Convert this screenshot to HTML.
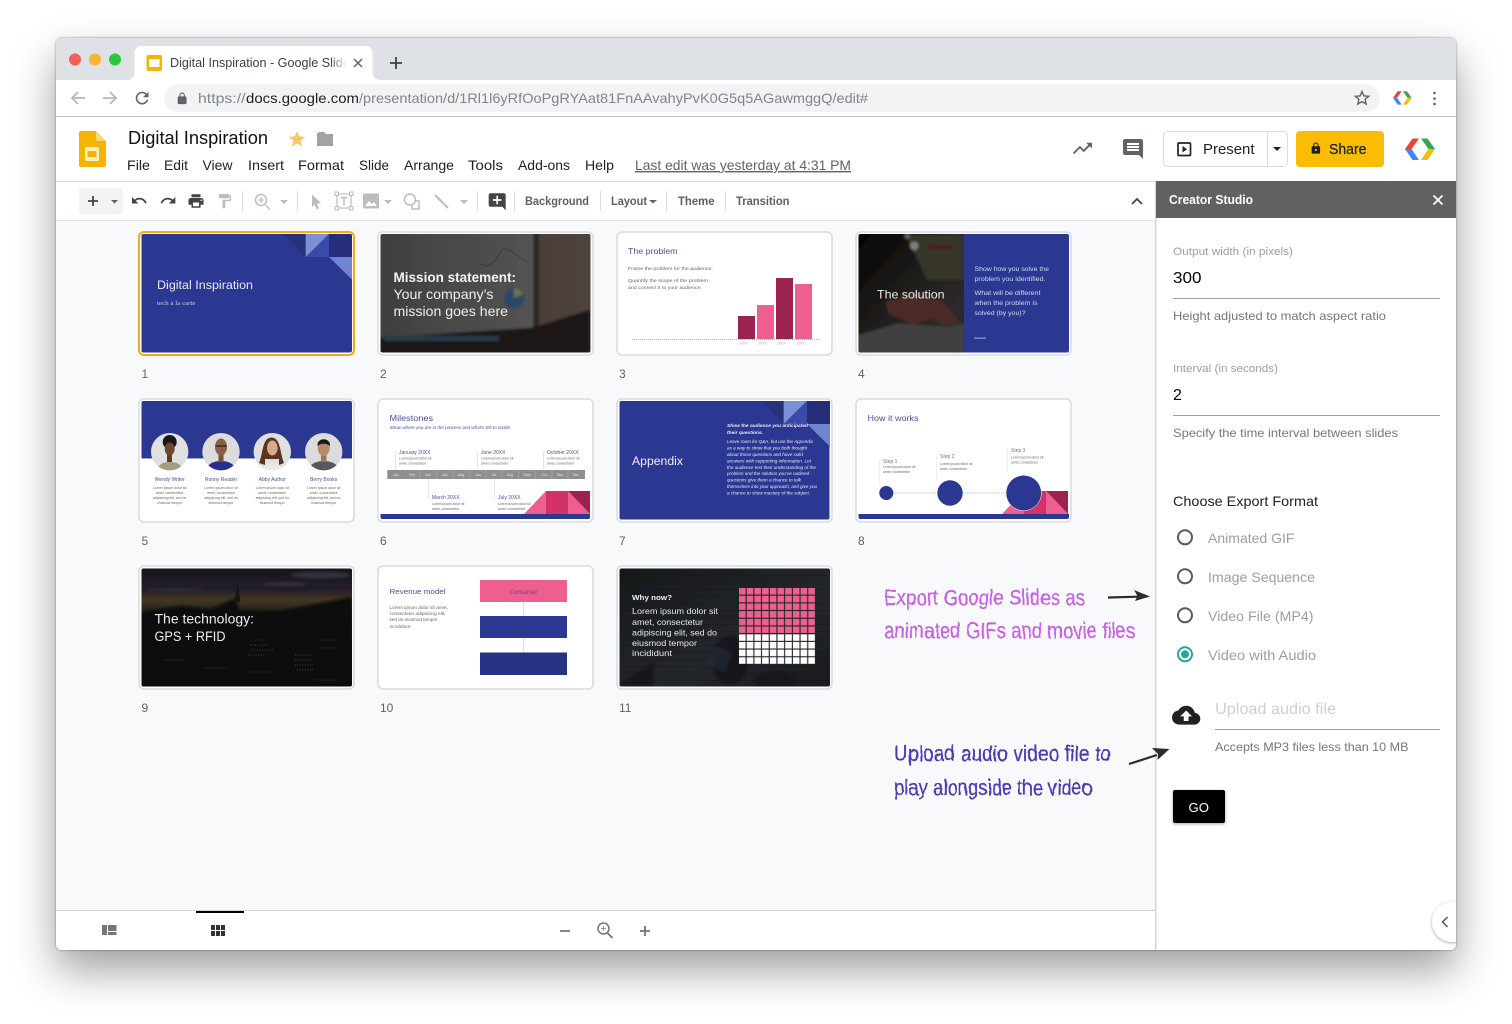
<!DOCTYPE html>
<html lang="en"><head><meta charset="utf-8"><title>Digital Inspiration - Google Slides</title>
<style>
html,body{margin:0;padding:0;background:#fff;width:1512px;height:1024px;overflow:hidden}
#win{position:absolute;left:56px;top:38px;width:1400px;height:912px;border-radius:6px;box-shadow:0 20px 42px rgba(0,0,0,.38),0 0 2px rgba(0,0,0,.45)}
svg{position:absolute;left:0;top:0}
text{font-family:"Liberation Sans",sans-serif}
.m{fill:#202124;font-size:14px}
.tb{fill:#444;font-size:12px;font-weight:bold;opacity:.85}
.lbl{fill:#9e9e9e;font-size:11px}
.hint{fill:#777;font-size:12px}
.rad{fill:#9e9e9e;font-size:14px}
.num{fill:#5f6368;font-size:12px}
.ico{fill:#5f6368}
.dis{fill:#bdbdbd}
.fr{fill:#fff;stroke:#dadce0;stroke-width:1.6}
.hw{font-size:22px;filter:url(#wob);stroke-width:.25px}
.tt{fill:#4a4f9e}
.nm{fill:#4a4f9e;font-size:5px;text-anchor:middle}
.lc{fill:#666;font-size:3.5px;text-anchor:middle}
.mo{fill:#e4e4e4;font-size:3.5px;text-anchor:middle}
.ms{fill:#4a4f9e;font-size:5px}
</style></head><body>
<div id="win"></div>
<svg width="1512" height="1024" viewBox="0 0 1512 1024" xmlns="http://www.w3.org/2000/svg">
<defs>
<filter id="wob" x="-5%" y="-30%" width="110%" height="160%"><feTurbulence type="fractalNoise" baseFrequency="0.07" numOctaves="2" seed="5"/><feDisplacementMap in="SourceGraphic" scale="3"/></filter>
<filter id="b1"><feGaussianBlur stdDeviation="1.2"/></filter>
<filter id="b0"><feGaussianBlur stdDeviation=".25"/></filter>
<filter id="sh" x="-20%" y="-20%" width="140%" height="150%"><feDropShadow dx="0" dy="1" stdDeviation="1.5" flood-color="#000" flood-opacity=".35"/></filter>
<linearGradient id="fade" x1="0" x2="1"><stop offset="0" stop-color="#fff" stop-opacity="0"/><stop offset="1" stop-color="#fff"/></linearGradient>
<linearGradient id="sky" x1="0" x2="0" y1="0" y2="1"><stop offset="0" stop-color="#15161d"/><stop offset=".18" stop-color="#241e2a"/><stop offset=".27" stop-color="#43361f"/><stop offset=".33" stop-color="#2b2a20"/><stop offset=".42" stop-color="#141517"/><stop offset="1" stop-color="#0d0d0d"/></linearGradient>
<linearGradient id="s2" x1="0" x2="1" y1="0" y2="0"><stop offset="0" stop-color="#3f3f3f"/><stop offset=".72" stop-color="#535353"/><stop offset=".74" stop-color="#262321"/><stop offset=".765" stop-color="#4a3f38"/><stop offset="1" stop-color="#4e433c"/></linearGradient>
<linearGradient id="s4" x1="0" x2="1" y1="0" y2="1"><stop offset="0" stop-color="#030303"/><stop offset=".45" stop-color="#1f1d1a"/><stop offset=".8" stop-color="#2d2b2b"/><stop offset="1" stop-color="#1f1e20"/></linearGradient>
<linearGradient id="s11" x1="0" x2="1" y1="0" y2="1"><stop offset="0" stop-color="#15181c"/><stop offset=".6" stop-color="#24272b"/><stop offset="1" stop-color="#181b1f"/></linearGradient>
<pattern id="cell" x="739" y="588" width="7.7" height="7.7" patternUnits="userSpaceOnUse"><rect width="6.6" height="6.6" fill="#fff"/></pattern>
<pattern id="cellp" x="739" y="588" width="7.7" height="7.7" patternUnits="userSpaceOnUse"><rect width="6.6" height="6.6" fill="#ee5f8f"/></pattern>
<pattern id="st" x="0" y="568" width="210" height="7" patternUnits="userSpaceOnUse"><rect width="210" height="1" fill="#000" opacity=".14"/></pattern>
<clipPath id="c1"><rect x="141.5" y="234" width="210.5" height="118.5" rx="2"/></clipPath>
<clipPath id="c2"><rect x="380.5" y="234" width="210" height="118.5" rx="2"/></clipPath>
<clipPath id="c4"><rect x="858.5" y="234" width="210.5" height="118.5" rx="2"/></clipPath>
<clipPath id="c9"><rect x="141.5" y="568.5" width="210.5" height="118" rx="2"/></clipPath>
<clipPath id="c11"><rect x="619.5" y="568.5" width="210.5" height="118" rx="2"/></clipPath>
<clipPath id="p1"><circle cx="169.7" cy="451.7" r="18.7"/></clipPath>
<clipPath id="p2"><circle cx="221" cy="451.7" r="18.7"/></clipPath>
<clipPath id="p3"><circle cx="272.3" cy="451.7" r="18.7"/></clipPath>
<clipPath id="p4"><circle cx="323.7" cy="451.7" r="18.7"/></clipPath>
<clipPath id="winc"><rect x="56" y="38" width="1400" height="912" rx="6"/></clipPath>
<g id="gd"><polygon points="0,11 7.5,.5 14,.5 6.5,11" fill="#ea4335"/><polygon points="0,11 6.5,11 14,22 7.5,22" fill="#4285f4"/><polygon points="16,.5 22.5,.5 30,11 23.5,11" fill="#34a853"/><polygon points="23.5,11 30,11 22.5,22 16,22" fill="#fbbc04"/></g>
<g id="tri"><polygon points="0,0 21.7,0 21.7,23" fill="#253079"/><polygon points="21.7,0 45,0 21.7,23" fill="#7c90d4"/><polygon points="45,0 45,23 21.7,23" fill="#3a48a8"/><rect x="45" width="23" height="23" fill="#252e7b"/><polygon points="45,23 68,23 68,45.500" fill="#6f85cf"/></g>
<g id="pk"><polygon points="0,23 22,0 22,23" fill="#ee5f8f"/><rect x="22" width="22" height="23" fill="#d23369"/><polygon points="44,0 66,23 44,23" fill="#ee5f8f"/><polygon points="44,0 66,0 66,23" fill="#9c2350"/></g>
</defs>

<g clip-path="url(#winc)">
<!-- chrome -->
<rect x="56" y="38" width="1400" height="42" fill="#dee1e6"/>
<rect x="56" y="80" width="1400" height="36" fill="#fff"/>
<rect x="56" y="116" width="1400" height="1" fill="#c4c5c8"/>
<rect x="56" y="117" width="1400" height="833" fill="#fff"/>
<circle cx="75" cy="59.500" r="6" fill="#f25f57"/><circle cx="95" cy="59.500" r="6" fill="#fbb52e"/><circle cx="115" cy="59.500" r="6" fill="#2ac640"/>
<path d="M127 80c5 0 7.500-3 7.500-8V53c0-4 3-7 7-7h224c4 0 7 3 7 7v19c0 5 3 8 8 8z" fill="#fff"/>
<rect x="146.500" y="55" width="15.500" height="16" rx="2" fill="#f4b400"/><rect x="149" y="59" width="10.500" height="8" fill="#fff"/>
<text x="170" y="67" font-size="12.500" fill="#3c4043" textLength="186" lengthAdjust="spacingAndGlyphs">Digital Inspiration - Google Slides</text>
<rect x="331" y="52" width="15" height="22" fill="url(#fade)"/><rect x="346" y="52" width="24" height="22" fill="#fff"/>
<path d="M354 59l8 8M362 59l-8 8" stroke="#5f6368" stroke-width="1.500"/>
<path d="M396 57v12M390 63h12" stroke="#3c4043" stroke-width="1.800"/>
<path d="M85 98H72m6-6l-6 6 6 6" fill="none" stroke="#b4b6b9" stroke-width="1.700"/>
<path d="M103 98h13m-6-6l6 6-6 6" fill="none" stroke="#b4b6b9" stroke-width="1.700"/>
<path class="ico" transform="translate(132.500 88.500) scale(.8)" d="M17.650 6.350C16.200 4.900 14.210 4 12 4c-4.420 0-7.990 3.580-7.990 8s3.570 8 7.990 8c3.730 0 6.840-2.550 7.730-6h-2.080c-.82 2.330-3.040 4-5.650 4-3.310 0-6-2.690-6-6s2.690-6 6-6c1.660 0 3.140.69 4.220 1.780L13 11h7V4l-2.350 2.350z"/>
<rect x="164" y="84" width="1216" height="28" rx="14" fill="#f1f3f4"/>
<path class="ico" transform="translate(175.500 92) scale(.55)" d="M18 8h-1V6c0-2.760-2.240-5-5-5S7 3.240 7 6v2H6c-1.100 0-2 .9-2 2v10c0 1.100.9 2 2 2h12c1.100 0 2-.9 2-2V10c0-1.100-.9-2-2-2zm-2.900 0H8.900V6c0-1.710 1.390-3.100 3.100-3.100 1.710 0 3.100 1.390 3.100 3.100v2z"/>
<text x="198" y="103" font-size="14" fill="#80868b" textLength="47.500" lengthAdjust="spacingAndGlyphs">https://</text>
<text x="246" y="103" font-size="14" fill="#202124" textLength="113" lengthAdjust="spacingAndGlyphs">docs.google.com</text>
<text x="359" y="103" font-size="14" fill="#80868b" textLength="509" lengthAdjust="spacingAndGlyphs">/presentation/d/1Rl1l6yRfOoPgRYAat81FnAAvahyPvK0G5q5AGawmggQ/edit#</text>
<path d="M1362 91.500l1.900 4.400 4.800.4-3.600 3.100 1.100 4.700-4.200-2.500-4.200 2.500 1.100-4.700-3.600-3.100 4.800-.4z" fill="none" stroke="#5f6368" stroke-width="1.400"/>
<use href="#gd" transform="translate(1393 91) scale(.62)"/>
<circle cx="1434.500" cy="93" r="1.300" fill="#5f6368"/><circle cx="1434.500" cy="98.500" r="1.300" fill="#5f6368"/><circle cx="1434.500" cy="104" r="1.300" fill="#5f6368"/>

<!-- docs header -->
<path d="M81 131h15l10 10v24a2 2 0 0 1-2 2H81a2 2 0 0 1-2-2v-32a2 2 0 0 1 2-2z" fill="#f4b400"/>
<path d="M96 131l10 10H96z" fill="#f8d775"/>
<rect x="85" y="147" width="14" height="14" rx="1" fill="#fdeec0"/><rect x="87.500" y="151" width="9" height="6" fill="#f4b400"/>
<text x="128" y="144" font-size="18.500" fill="#111" textLength="140" lengthAdjust="spacingAndGlyphs">Digital Inspiration</text>
<path d="M297 131l2.300 5.400 5.900.5-4.500 3.900 1.400 5.700-5.100-3-5.100 3 1.400-5.700-4.500-3.900 5.900-.5z" fill="#f5c96a"/>
<path d="M319 132h5l2 2h7v12h-16v-12.500z" fill="#a3a3a3"/>
<g class="m">
<text x="127" y="170" textLength="23" lengthAdjust="spacingAndGlyphs">File</text>
<text x="164" y="170" textLength="24" lengthAdjust="spacingAndGlyphs">Edit</text>
<text x="202.500" y="170" textLength="30" lengthAdjust="spacingAndGlyphs">View</text>
<text x="248" y="170" textLength="36" lengthAdjust="spacingAndGlyphs">Insert</text>
<text x="298" y="170" textLength="46" lengthAdjust="spacingAndGlyphs">Format</text>
<text x="359" y="170" textLength="30" lengthAdjust="spacingAndGlyphs">Slide</text>
<text x="404" y="170" textLength="50" lengthAdjust="spacingAndGlyphs">Arrange</text>
<text x="468" y="170" textLength="35" lengthAdjust="spacingAndGlyphs">Tools</text>
<text x="518" y="170" textLength="52" lengthAdjust="spacingAndGlyphs">Add-ons</text>
<text x="585" y="170" textLength="29" lengthAdjust="spacingAndGlyphs">Help</text>
</g>
<text x="635" y="170" font-size="14" fill="#5f6368" text-decoration="underline" textLength="216" lengthAdjust="spacingAndGlyphs">Last edit was yesterday at 4:31 PM</text>
<path class="ico" transform="translate(1071 137) scale(.95)" d="M16 6l2.290 2.290-4.880 4.880-4-4L2 16.590 3.410 18l6-6 4 4 6.300-6.290L22 12V6z"/>
<path class="ico" transform="translate(1121 137) scale(1)" d="M21.990 4c0-1.100-.89-2-1.990-2H4c-1.100 0-2 .9-2 2v12c0 1.100.9 2 2 2h14l4 4-.01-18zM18 14H6v-2h12v2zm0-3H6V9h12v2zm0-3H6V6h12v2z"/>
<rect x="1163.500" y="131.500" width="124" height="35" rx="4" fill="#fff" stroke="#dadce0"/>
<path d="M1267.500 132v34" stroke="#dadce0"/>
<rect x="1178" y="143" width="12.500" height="12.500" rx="1" fill="none" stroke="#202124" stroke-width="1.700"/><path d="M1182.500 146v6.500l4.500-3.200z" fill="#202124"/>
<text x="1203" y="154" font-size="14.500" fill="#202124" textLength="51.500" lengthAdjust="spacingAndGlyphs">Present</text>
<path d="M1273 147h8l-4 4z" fill="#202124"/>
<rect x="1296" y="131" width="88" height="36" rx="4" fill="#fbbc04"/>
<path fill="#202124" transform="translate(1309.500 142) scale(.53)" d="M18 8h-1V6c0-2.760-2.240-5-5-5S7 3.240 7 6v2H6c-1.100 0-2 .9-2 2v10c0 1.100.9 2 2 2h12c1.100 0 2-.9 2-2V10c0-1.100-.9-2-2-2zm-6 9c-1.100 0-2-.9-2-2s.9-2 2-2 2 .9 2 2-.9 2-2 2zm3.100-9H8.900V6c0-1.710 1.390-3.100 3.100-3.100 1.710 0 3.100 1.390 3.100 3.100v2z"/>
<text x="1329" y="154" font-size="14.500" fill="#202124" stroke="#202124" stroke-width=".2" textLength="37.500" lengthAdjust="spacingAndGlyphs">Share</text>
<use href="#gd" transform="translate(1405 138)"/>
<rect x="56" y="181" width="1100" height="1" fill="#dadce0"/>

<!-- main -->
<rect x="56" y="221" width="1100" height="689" fill="#f8f9fb"/>
<rect x="56" y="220" width="1100" height="1" fill="#dfe1e5"/>
<rect x="56" y="910" width="1100" height="1" fill="#cfd1d5"/>

<!-- toolbar -->
<rect x="79" y="188" width="44" height="26" rx="2" fill="#f1f3f4"/>
<path d="M93 196v10M88 201h10" stroke="#444" stroke-width="1.800"/><path d="M111 200h7l-3.500 3.500z" fill="#5f6368"/>
<path fill="#444" transform="translate(130.500 192) scale(.72)" d="M12.500 8c-2.650 0-5.050.99-6.900 2.600L2 7v9h9l-3.620-3.620c1.390-1.160 3.160-1.880 5.120-1.880 3.540 0 6.550 2.310 7.600 5.500l2.370-.78C21.080 11.030 17.150 8 12.500 8z"/>
<path fill="#444" transform="translate(159.500 192) scale(.72)" d="M18.400 10.600C16.550 8.990 14.150 8 11.500 8c-4.650 0-8.580 3.030-9.960 7.220L3.900 16c1.050-3.190 4.050-5.500 7.600-5.500 1.950 0 3.730.72 5.120 1.880L13 16h9V7l-3.600 3.600z"/>
<path fill="#444" transform="translate(187 192) scale(.75)" d="M19 8H5c-1.660 0-3 1.340-3 3v6h4v4h12v-4h4v-6c0-1.660-1.340-3-3-3zm-3 11H8v-5h8v5zm3-7c-.55 0-1-.45-1-1s.45-1 1-1 1 .45 1 1-.45 1-1 1zm-1-9H6v4h12V3z"/>
<path class="dis" transform="translate(216 192.500) scale(.72)" d="M18 4V3c0-.55-.45-1-1-1H5c-.55 0-1 .45-1 1v4c0 .55.45 1 1 1h12c.55 0 1-.45 1-1V6h1v4H9v11c0 .55.45 1 1 1h2c.55 0 1-.45 1-1v-9h8V4h-3z"/>
<path d="M242.500 191v20M297.500 191v20M477.500 191v20M514.500 191v20M600.500 191v20M666.500 191v20M725.500 191v20" stroke="#dadce0"/>
<circle cx="261" cy="200" r="5.500" fill="none" stroke="#bdbdbd" stroke-width="1.500"/><path d="M265 204.500l5 5M258 200h6M261 197v6" stroke="#bdbdbd" stroke-width="1.300"/>
<path d="M280 200h8l-4 4zM384 200h8l-4 4zM460 200h8l-4 4z" fill="#bdbdbd"/>
<path d="M312 194.500l9 8.500-4 .5 2 5-2 1-2.300-5-2.700 2.500z" fill="#bdbdbd"/>
<rect x="337" y="194" width="14" height="14" fill="none" stroke="#bdbdbd" stroke-width="1.200"/><rect x="335" y="192" width="3.500" height="3.500" fill="#fff" stroke="#bdbdbd"/><rect x="349.500" y="192" width="3.500" height="3.500" fill="#fff" stroke="#bdbdbd"/><rect x="335" y="206.500" width="3.500" height="3.500" fill="#fff" stroke="#bdbdbd"/><rect x="349.500" y="206.500" width="3.500" height="3.500" fill="#fff" stroke="#bdbdbd"/><path d="M340.500 197.500h7M344 197.500v8" stroke="#bdbdbd" stroke-width="1.500"/>
<rect x="363" y="193.500" width="16" height="15" rx="1" fill="#bdbdbd"/><path d="M365 206l4-5 3 3 2-2 3 4z" fill="#fff"/>
<circle cx="410" cy="199.500" r="5.500" fill="none" stroke="#bdbdbd" stroke-width="1.500"/><path d="M412 204v5h7v-8h-3" fill="none" stroke="#bdbdbd" stroke-width="1.500"/>
<path d="M435 195l13 13" stroke="#bdbdbd" stroke-width="2"/>
<path fill="#444" transform="translate(487 191.500) scale(.85)" d="M21.990 4c0-1.100-.89-2-1.990-2H4c-1.100 0-2 .9-2 2v12c0 1.100.9 2 2 2h14l4 4-.01-18zM17 11h-4v4h-2v-4H7V9h4V5h2v4h4v2z"/>
<g class="tb">
<text x="525" y="205" textLength="64" lengthAdjust="spacingAndGlyphs">Background</text>
<text x="611" y="205" textLength="36" lengthAdjust="spacingAndGlyphs">Layout</text>
<text x="678" y="205" textLength="36.500" lengthAdjust="spacingAndGlyphs">Theme</text>
<text x="736" y="205" textLength="53.500" lengthAdjust="spacingAndGlyphs">Transition</text>
</g>
<path d="M649 200h8l-4 3.500z" fill="#5f6368"/>
<path d="M1132 204l5-5 5 5" fill="none" stroke="#444" stroke-width="1.800"/>

<g filter="url(#b0)">
<!-- slide 1 -->
<rect x="139" y="232" width="215" height="123" rx="5" fill="#fff" stroke="#f4a81c" stroke-width="2"/>
<g clip-path="url(#c1)"><rect x="141.500" y="234" width="210.500" height="118.500" fill="#2c3792"/><use href="#tri" transform="translate(284 234)"/></g>
<text x="157" y="289" font-size="12.300" fill="#e8eaf6" textLength="96" lengthAdjust="spacingAndGlyphs">Digital Inspiration</text>
<text x="157" y="305" font-size="6" fill="#c5cae9" style="font-family:'Liberation Serif',serif" textLength="38.500" lengthAdjust="spacingAndGlyphs">tech à la carte</text>

<!-- slide 2 -->
<rect class="fr" x="378" y="232" width="215" height="123" rx="5"/>
<g clip-path="url(#c2)">
<rect x="380.500" y="234" width="210" height="118.500" fill="url(#s2)"/>
<g filter="url(#b1)">
<path d="M380 338L533 328l57-18v44H380z" fill="#1a1817"/>
<path d="M384 336h115v5H384z" fill="#2b3a4a"/>
<circle cx="514" cy="298" r="10" fill="#2b4768"/><path d="M514 298v-10a10 10 0 0 1 9 6z" fill="#66784c"/>
</g>
<path d="M480 264l8 2 7-5 8-13 8 3 16 11" fill="none" stroke="#2c2c2c" stroke-width=".6" opacity=".8"/>
</g>
<text x="393.500" y="282" font-size="14" font-weight="bold" fill="#f3f3f3" textLength="122.500" lengthAdjust="spacingAndGlyphs">Mission statement:</text>
<text x="393.500" y="299" font-size="14" fill="#eee" textLength="100" lengthAdjust="spacingAndGlyphs">Your company’s</text>
<text x="393.500" y="316" font-size="14" fill="#eee" textLength="114.500" lengthAdjust="spacingAndGlyphs">mission goes here</text>

<!-- slide 3 -->
<rect class="fr" x="617" y="232" width="215" height="123" rx="5"/>
<text class="tt" x="628" y="254" font-size="8.200" textLength="49.500" lengthAdjust="spacingAndGlyphs">The problem</text>
<g fill="#666" font-size="4.700">
<text x="628" y="270" textLength="85" lengthAdjust="spacingAndGlyphs">Frame the problem for the audience.</text>
<text x="628" y="282" textLength="80" lengthAdjust="spacingAndGlyphs">Quantify the scope of the problem</text>
<text x="628" y="289" textLength="74" lengthAdjust="spacingAndGlyphs">and connect it to your audience.</text>
</g>
<rect x="738" y="316" width="17" height="23" fill="#9c2350"/><rect x="757" y="305" width="17" height="34" fill="#ee5f8f"/><rect x="776" y="278" width="17" height="61" fill="#9c2350"/><rect x="795" y="284" width="17" height="55" fill="#ee5f8f"/>
<path d="M632 339.500h188" stroke="#999" stroke-width=".8" stroke-dasharray="1 1"/>
<g fill="#aaa" font-size="3.500"><text x="739" y="344.500">20XX</text><text x="758" y="344.500">20XX</text><text x="777" y="344.500">20XX</text><text x="796" y="344.500">20XX</text></g>

<!-- slide 4 -->
<rect class="fr" x="856" y="232" width="215" height="123" rx="5"/>
<g clip-path="url(#c4)">
<rect x="858.500" y="234" width="106" height="118.500" fill="url(#s4)"/>
<g filter="url(#b1)">
<path d="M905 234h60v46h-38z" fill="#34352b"/>
<circle cx="914" cy="246" r="4.500" fill="#7d7d7d"/><circle cx="907" cy="236" r="3" fill="#666"/>
<rect x="928" y="245" width="26" height="5" fill="#4a2320"/>
<path d="M858 335l40-12 50 4 17-4v30h-107z" fill="#3f3f3f"/>
<path d="M885 302l30-9 28 8 18 22-16 3-14-7-18 6-24-11z" fill="#4a2a28"/>
</g>
<rect x="964" y="234" width="105" height="118.500" fill="#2c3792"/>
</g>
<text x="877" y="298.500" font-size="12" fill="#eee" textLength="67.500" lengthAdjust="spacingAndGlyphs">The solution</text>
<g fill="#d3d7ef" font-size="6.500">
<text x="974.500" y="271" textLength="74.500" lengthAdjust="spacingAndGlyphs">Show how you solve the</text>
<text x="974.500" y="281" textLength="71" lengthAdjust="spacingAndGlyphs">problem you identified.</text>
<text x="974.500" y="295" textLength="66" lengthAdjust="spacingAndGlyphs">What will be different</text>
<text x="974.500" y="305" textLength="63" lengthAdjust="spacingAndGlyphs">when the problem is</text>
<text x="974.500" y="315" textLength="51" lengthAdjust="spacingAndGlyphs">solved (by you)?</text>
</g>
<rect x="974" y="337.500" width="12" height="1.200" fill="#8f97d0"/>

<!-- numbers -->
<g class="num">
<text x="141.500" y="378">1</text><text x="380" y="378">2</text><text x="619" y="378">3</text><text x="858" y="378">4</text>
<text x="141.500" y="545">5</text><text x="380" y="545">6</text><text x="619" y="545">7</text><text x="858" y="545">8</text>
<text x="141.500" y="712">9</text><text x="380" y="712">10</text><text x="619" y="712">11</text>
</g>

<!-- slide 5 -->
<rect class="fr" x="139" y="399" width="215" height="123" rx="5"/>
<path d="M141.500 403a2 2 0 0 1 2-2H350a2 2 0 0 1 2 2v55H141.500z" fill="#2c3792"/>
<rect x="141.500" y="458" width="210.500" height="1" fill="#9da3d8"/>
<g clip-path="url(#p1)"><rect x="150" y="432" width="40" height="40" fill="#e0e0e0"/><path d="M156 472c2-8 7-10 13.700-10s12 2 14 10z" fill="#a69a82"/><rect x="167" y="454" width="5" height="8" fill="#5d3a28"/><circle cx="169.700" cy="442" r="7" fill="#1f1612"/><ellipse cx="169.700" cy="449" rx="5" ry="6.500" fill="#6d4632"/></g>
<g clip-path="url(#p2)"><rect x="201" y="432" width="40" height="40" fill="#dcdcdc"/><path d="M205 472c2-8 8-11 16-11s14 3 16 11z" fill="#2b2f8f"/><rect x="218.500" y="454" width="5" height="8" fill="#7a523a"/><ellipse cx="221" cy="447" rx="6" ry="8.500" fill="#8a5e44"/><path d="M215.500 446h11" stroke="#222" stroke-width="1.300"/></g>
<g clip-path="url(#p3)"><rect x="252" y="432" width="40" height="40" fill="#e0e0e0"/><path d="M265 442c-3 6-3 14-6 21l6 2v-6h14v6l5-2c-3-7-3-15-6-21-3-6-10-6-13 0z" fill="#5a3420"/><path d="M261 472c2-6 6-9 11-9s10 3 12 9z" fill="#efe9dc"/><ellipse cx="272.300" cy="448" rx="5.300" ry="7.500" fill="#d9a98c"/></g>
<g clip-path="url(#p4)"><rect x="303" y="432" width="40" height="40" fill="#dcdcdc"/><path d="M307 472c2-8 9-11 16.700-11s15 3 17 11z" fill="#55595c"/><rect x="321" y="454" width="5.500" height="8" fill="#9d7558"/><ellipse cx="323.700" cy="448" rx="6" ry="8" fill="#b98a6a"/><path d="M317.500 446c-1-9 13.500-9 12.500 0-3-3-9.500-3-12.500 0z" fill="#1d1d1d"/></g>
<text class="nm" x="169.700" y="481">Wendy Writer</text><text class="nm" x="221" y="481">Ronny Reader</text><text class="nm" x="272.300" y="481">Abby Author</text><text class="nm" x="323.700" y="481">Berry Books</text>
<g class="lc">
<text x="169.700" y="489">Lorem ipsum dolor sit</text><text x="169.700" y="494">amet, consectetur</text><text x="169.700" y="499">adipiscing elit, sed do</text><text x="169.700" y="504">eiusmod tempor</text>
<text x="221" y="489">Lorem ipsum dolor sit</text><text x="221" y="494">amet, consectetur</text><text x="221" y="499">adipiscing elit, sed do</text><text x="221" y="504">eiusmod tempor</text>
<text x="272.300" y="489">Lorem ipsum dolor sit</text><text x="272.300" y="494">amet, consectetur</text><text x="272.300" y="499">adipiscing elit, sed do</text><text x="272.300" y="504">eiusmod tempor</text>
<text x="323.700" y="489">Lorem ipsum dolor sit</text><text x="323.700" y="494">amet, consectetur</text><text x="323.700" y="499">adipiscing elit, sed do</text><text x="323.700" y="504">eiusmod tempor</text>
</g>

<!-- slide 6 -->
<rect class="fr" x="378" y="399" width="215" height="123" rx="5"/>
<text class="tt" x="389.500" y="421" font-size="8" textLength="43.500" lengthAdjust="spacingAndGlyphs">Milestones</text>
<text class="tt" x="389.500" y="429" font-size="4.400" font-style="italic" textLength="120.500" lengthAdjust="spacingAndGlyphs">Show where you are in the process and what’s left to tackle</text>
<rect x="387.300" y="470" width="197.700" height="9" fill="#8f8f8f"/>
<path d="M420 470v9M436.500 470v9M453 470v9M469.500 470v9M486 470v9M502 470v9M518.500 470v9M535 470v9M552 470v9M568 470v9" stroke="#bdbdbd" stroke-width=".4"/>
<g class="mo"><text x="396" y="476">Jan</text><text x="412" y="476">Feb</text><text x="428" y="476">Mar</text><text x="445" y="476">Apr</text><text x="461" y="476">May</text><text x="478" y="476">Jun</text><text x="494" y="476">Jul</text><text x="510" y="476">Aug</text><text x="527" y="476">Sept</text><text x="544" y="476">Oct</text><text x="560" y="476">Nov</text><text x="576" y="476">Dec</text></g>
<path d="M395.500 451v19M477.500 451v19M543.500 451v19M428.500 479v19M494.500 479v19" stroke="#ccc" stroke-width=".5"/>
<g class="ms"><text x="399" y="454">January 20XX</text><text x="481" y="454">June 20XX</text><text x="547" y="454">October 20XX</text><text x="432" y="499">March 20XX</text><text x="498" y="499">July 20XX</text></g>
<g fill="#666" font-size="3.400">
<text x="399" y="459.500">Lorem ipsum dolor sit</text><text x="399" y="464.500">amet, consectetur</text>
<text x="481" y="459.500">Lorem ipsum dolor sit</text><text x="481" y="464.500">amet, consectetur</text>
<text x="547" y="459.500">Lorem ipsum dolor sit</text><text x="547" y="464.500">amet, consectetur</text>
<text x="432" y="505">Lorem ipsum dolor sit</text><text x="432" y="510">amet, consectetur</text>
<text x="498" y="505">Lorem ipsum dolor sit</text><text x="498" y="510">amet, consectetur</text>
</g>
<use href="#pk" transform="translate(524 491)"/>
<path d="M380.500 514H590v3a2 2 0 0 1-2 2H382.500a2 2 0 0 1-2-2z" fill="#2c3792"/>

<!-- slide 7 -->
<rect class="fr" x="617" y="399" width="215" height="123" rx="5"/>
<rect x="619.500" y="401" width="210" height="118.500" rx="2" fill="#2c3792"/>
<use href="#tri" transform="translate(762 401)"/>
<text x="632" y="465" font-size="12.300" fill="#eef" textLength="51" lengthAdjust="spacingAndGlyphs">Appendix</text>
<g fill="#e6e8f6" font-size="4.600" font-style="italic">
<text x="727" y="427" font-weight="bold" textLength="81" lengthAdjust="spacingAndGlyphs">Show the audience you anticipated</text>
<text x="727" y="434" font-weight="bold" textLength="36" lengthAdjust="spacingAndGlyphs">their questions.</text>
<text x="727" y="443" textLength="86" lengthAdjust="spacingAndGlyphs">Leave room for Q&amp;A, but use the Appendix</text>
<text x="727" y="449.500" textLength="80" lengthAdjust="spacingAndGlyphs">as a way to show that you both thought</text>
<text x="727" y="456" textLength="76" lengthAdjust="spacingAndGlyphs">about those questions and have solid</text>
<text x="727" y="462.500" textLength="84" lengthAdjust="spacingAndGlyphs">answers with supporting information. Let</text>
<text x="727" y="469" textLength="89" lengthAdjust="spacingAndGlyphs">the audience test their understanding of the</text>
<text x="727" y="475" textLength="85" lengthAdjust="spacingAndGlyphs">problem and the solution you’ve outlined -</text>
<text x="727" y="481.500" textLength="74" lengthAdjust="spacingAndGlyphs">questions give them a chance to talk</text>
<text x="727" y="488" textLength="90" lengthAdjust="spacingAndGlyphs">themselves into your approach, and give you</text>
<text x="727" y="494.500" textLength="83" lengthAdjust="spacingAndGlyphs">a chance to show mastery of the subject.</text>
</g>

<!-- slide 8 -->
<rect class="fr" x="856" y="399" width="215" height="123" rx="5"/>
<text class="tt" x="867.500" y="421" font-size="8" textLength="51" lengthAdjust="spacingAndGlyphs">How it works</text>
<use href="#pk" transform="translate(1002 491)"/>
<path d="M858.500 514H1069v3a2 2 0 0 1-2 2H860.500a2 2 0 0 1-2-2z" fill="#2c3792"/>
<path d="M893 493h44M963 493h44" stroke="#bbb" stroke-width=".9" stroke-dasharray="1 1"/>
<circle cx="886.300" cy="493" r="7" fill="#2c3792"/><circle cx="950" cy="493" r="12.700" fill="#2c3792"/><circle cx="1023.700" cy="493" r="17.700" fill="#2c3792" stroke="#fff" stroke-width=".5"/>
<path d="M879.500 460v25M936.500 456v25M1007 448v25" stroke="#ddd" stroke-width=".5"/>
<g fill="#777" font-size="5"><text x="883" y="463">Step 1</text><text x="940" y="458">Step 2</text><text x="1011" y="452">Step 3</text></g>
<g fill="#666" font-size="3.400">
<text x="883" y="468">Lorem ipsum dolor sit</text><text x="883" y="473">amet, consectetur</text>
<text x="940" y="465">Lorem ipsum dolor sit</text><text x="940" y="470">amet, consectetur</text>
<text x="1011" y="458.500">Lorem ipsum dolor sit</text><text x="1011" y="463.500">amet, consectetur</text>
</g>

<!-- slide 9 -->
<rect class="fr" x="139" y="566" width="215" height="123" rx="5"/>
<g clip-path="url(#c9)">
<rect x="141.500" y="568.500" width="210.500" height="118" fill="url(#sky)"/>
<g filter="url(#b1)">
<ellipse cx="320" cy="575" rx="30" ry="3.500" fill="#32323c"/><ellipse cx="285" cy="584" rx="22" ry="2" fill="#33303c"/><ellipse cx="175" cy="590" rx="28" ry="1.500" fill="#332d36"/>
<path d="M141 612l40-6 30 3 25-11 3 12 40 1 73-14v100H141z" fill="#0e0e0f"/>
</g>
<path d="M236.500 590l1-8 1 8 2 12h-6z" fill="#141210"/>
<g fill="none" stroke="#6b5f3c" stroke-width=".8" stroke-dasharray="1 1.500" opacity=".8">
<path d="M250 645h18M252 650h22M248 655h18M295 655h18M295 660h18M295 665h18M297 670h16M250 672h22M255 640h10M318 640h20M320 648h16M165 660h20M205 668h24M315 680h25"/>
</g>
</g>
<text x="154.500" y="623.500" font-size="13.500" fill="#eee" textLength="99.500" lengthAdjust="spacingAndGlyphs">The technology:</text>
<text x="154.500" y="641" font-size="13.500" fill="#eee" textLength="71" lengthAdjust="spacingAndGlyphs">GPS + RFID</text>

<!-- slide 10 -->
<rect class="fr" x="378" y="566" width="215" height="123" rx="5"/>
<text class="tt" x="389.500" y="594" font-size="7.300" textLength="56" lengthAdjust="spacingAndGlyphs">Revenue model</text>
<g fill="#666" font-size="4.200">
<text x="389.500" y="609" textLength="58.500" lengthAdjust="spacingAndGlyphs">Lorem ipsum dolor sit amet,</text>
<text x="389.500" y="615" textLength="56" lengthAdjust="spacingAndGlyphs">consectetur adipiscing elit,</text>
<text x="389.500" y="621" textLength="48" lengthAdjust="spacingAndGlyphs">sed do eiusmod tempor</text>
<text x="389.500" y="628" textLength="21" lengthAdjust="spacingAndGlyphs">incididunt</text>
</g>
<path d="M523.500 602v50" stroke="#ddd"/>
<rect x="480" y="580" width="87" height="22" fill="#ee5f8f"/><rect x="480" y="616" width="87" height="22" fill="#2c3792"/><rect x="480" y="652.500" width="87" height="22.500" fill="#283084"/>
<text x="523.500" y="594" font-size="6" fill="#7a3a90" text-anchor="middle">Consumer</text>

<!-- slide 11 -->
<rect class="fr" x="617" y="566" width="215" height="123" rx="5"/>
<g clip-path="url(#c11)">
<rect x="619.500" y="568.500" width="210.500" height="118" fill="url(#s11)"/>
<rect x="619.500" y="568.500" width="210.500" height="118" fill="url(#st)"/>
<g filter="url(#b1)" fill="#14171b"><ellipse cx="730" cy="660" rx="18" ry="24"/><ellipse cx="775" cy="682" rx="20" ry="10"/><path d="M619 686l34-24v24z"/></g>
<path d="M715 645l18 8-8 20-18-8z" fill="#253040" opacity=".5" filter="url(#b1)"/>
</g>
<rect x="739" y="588" width="76.400" height="45.100" fill="url(#cellp)"/>
<rect x="739" y="634.200" width="76.400" height="29.700" fill="url(#cell)"/>
<text x="632" y="600" font-size="7.500" font-weight="bold" fill="#f2f2f2" textLength="40" lengthAdjust="spacingAndGlyphs">Why now?</text>
<g font-size="8.300" fill="#e8e8e8">
<text x="632" y="614" textLength="86" lengthAdjust="spacingAndGlyphs">Lorem ipsum dolor sit</text>
<text x="632" y="625" textLength="71" lengthAdjust="spacingAndGlyphs">amet, consectetur</text>
<text x="632" y="635.500" textLength="85" lengthAdjust="spacingAndGlyphs">adipiscing elit, sed do</text>
<text x="632" y="646" textLength="65" lengthAdjust="spacingAndGlyphs">eiusmod tempor</text>
<text x="632" y="656" textLength="40" lengthAdjust="spacingAndGlyphs">incididunt</text>
</g>
</g>

<!-- handwriting -->
<text class="hw" x="884" y="605" fill="#c75ee6" stroke="#c75ee6" textLength="201" lengthAdjust="spacingAndGlyphs">Export Google Slides as</text>
<text class="hw" x="884" y="638" fill="#c75ee6" stroke="#c75ee6" textLength="251" lengthAdjust="spacingAndGlyphs">animated GIFs and movie files</text>
<text class="hw" x="894" y="761" fill="#4a3ab4" stroke="#4a3ab4" textLength="217" lengthAdjust="spacingAndGlyphs">Upload audio video file to</text>
<text class="hw" x="894" y="795" fill="#4a3ab4" stroke="#4a3ab4" textLength="198" lengthAdjust="spacingAndGlyphs">play alongside the video</text>

<!-- bottom bar -->
<rect x="56" y="911" width="1099" height="39" fill="#fff"/>
<rect x="196" y="911" width="48" height="2" fill="#000"/>
<rect x="102" y="925" width="5" height="10" fill="#757575"/><rect x="108" y="925" width="8.500" height="6" fill="#757575"/><rect x="108" y="932" width="8.500" height="3" fill="#757575"/>
<g fill="#333"><rect x="211" y="925" width="4" height="5"/><rect x="216" y="925" width="4" height="5"/><rect x="221" y="925" width="4" height="5"/><rect x="211" y="931" width="4" height="5"/><rect x="216" y="931" width="4" height="5"/><rect x="221" y="931" width="4" height="5"/></g>
<path d="M560 931h10M640 931h10M645 926v10" stroke="#757575" stroke-width="1.800"/>
<circle cx="603.500" cy="928.500" r="5.500" fill="none" stroke="#757575" stroke-width="1.500"/><path d="M607.500 933l5 5" stroke="#757575" stroke-width="1.800"/><path d="M601 928.500h5M603.500 926v5" stroke="#757575" stroke-width=".8"/>

<!-- side panel -->
<rect x="1156" y="181" width="300" height="769" fill="#fff"/>
<rect x="1155" y="181" width="1.500" height="769" fill="#d5d5d5"/>
<rect x="1156" y="181" width="300" height="37" fill="#616161"/>
<text x="1169" y="204" font-size="12.500" font-weight="bold" fill="#fff" textLength="84" lengthAdjust="spacingAndGlyphs">Creator Studio</text>
<path d="M1433.500 195.500l9 9M1442.500 195.500l-9 9" stroke="#fff" stroke-width="1.800"/>
<text class="lbl" x="1173" y="255" textLength="120" lengthAdjust="spacingAndGlyphs">Output width (in pixels)</text>
<text x="1173" y="283" font-size="16" fill="#000" textLength="28.500" lengthAdjust="spacingAndGlyphs">300</text>
<rect x="1173" y="298" width="267" height="1" fill="#9e9e9e"/>
<text class="hint" x="1173" y="320" textLength="213" lengthAdjust="spacingAndGlyphs">Height adjusted to match aspect ratio</text>
<text class="lbl" x="1173" y="372" textLength="105" lengthAdjust="spacingAndGlyphs">Interval (in seconds)</text>
<text x="1173" y="400" font-size="16" fill="#000">2</text>
<rect x="1173" y="415" width="267" height="1" fill="#9e9e9e"/>
<text class="hint" x="1173" y="437" textLength="225" lengthAdjust="spacingAndGlyphs">Specify the time interval between slides</text>
<text x="1173" y="506" font-size="14" fill="#212121" textLength="145" lengthAdjust="spacingAndGlyphs">Choose Export Format</text>
<g fill="none" stroke="#5a5a5a" stroke-width="2"><circle cx="1185" cy="537.300" r="7"/><circle cx="1185" cy="576.300" r="7"/><circle cx="1185" cy="615.300" r="7"/></g>
<circle cx="1185" cy="654.300" r="7" fill="none" stroke="#26a69a" stroke-width="2"/><circle cx="1185" cy="654.300" r="4" fill="#26a69a"/>
<text class="rad" x="1208" y="543" textLength="86.500" lengthAdjust="spacingAndGlyphs">Animated GIF</text>
<text class="rad" x="1208" y="582" textLength="107" lengthAdjust="spacingAndGlyphs">Image Sequence</text>
<text class="rad" x="1208" y="621" textLength="105.500" lengthAdjust="spacingAndGlyphs">Video File (MP4)</text>
<text class="rad" x="1208" y="660" textLength="108" lengthAdjust="spacingAndGlyphs">Video with Audio</text>
<path fill="#212121" transform="translate(1172 701) scale(1.180)" d="M19.350 10.040C18.670 6.590 15.640 4 12 4 9.110 4 6.600 5.640 5.350 8.040 2.340 8.360 0 10.910 0 14c0 3.310 2.690 6 6 6h13c2.760 0 5-2.240 5-5 0-2.640-2.050-4.780-4.650-4.960zM14 13v4h-4v-4H7l5-5 5 5h-3z"/>
<text x="1215" y="714" font-size="16" fill="#cfcfcf" textLength="121" lengthAdjust="spacingAndGlyphs">Upload audio file</text>
<rect x="1215" y="729" width="225" height="1" fill="#9e9e9e"/>
<text class="hint" x="1215" y="751" textLength="193.500" lengthAdjust="spacingAndGlyphs">Accepts MP3 files less than 10 MB</text>
<rect x="1173" y="790" width="52" height="33" rx="2" fill="#000" filter="url(#sh)"/>
<text x="1188.500" y="812" font-size="13" fill="#fff" textLength="20.500" lengthAdjust="spacingAndGlyphs">GO</text>
<circle cx="1452" cy="922" r="20" fill="#fff" filter="url(#sh)"/>
<path d="M1447.500 917l-5 5 5 5" fill="none" stroke="#555" stroke-width="1.500"/>

<!-- arrows over panel edge -->
<path d="M1108 597.500l30-.8" stroke="#2b2b2b" stroke-width="2.200" fill="none"/><path d="M1134 590l16 6.500-15 4.500 2.500-5z" fill="#2b2b2b"/>
<path d="M1129 764l28-9" stroke="#2b2b2b" stroke-width="2.200" fill="none"/><path d="M1152 748l17.500 1-12 11 .5-6z" fill="#2b2b2b"/>
</g>
</svg>
</body></html>
